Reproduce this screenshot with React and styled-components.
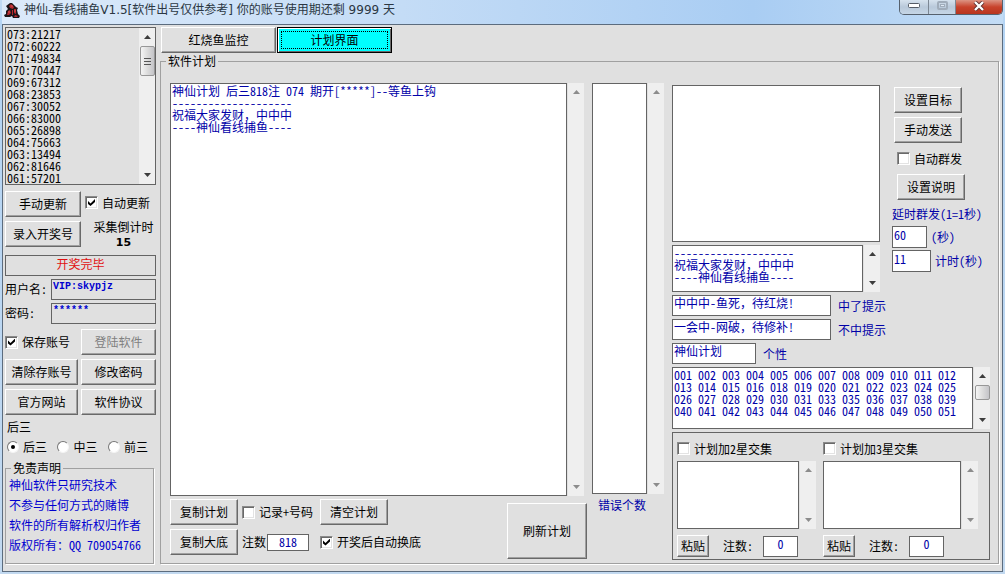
import styled, { createGlobalStyle, css } from 'styled-components';

const DRAWS = [
    '073:21217', '072:60222', '071:49834', '070:70447', '069:67312', '068:23853', '067:30052',
    '066:83000', '065:26898', '064:75663', '063:13494', '062:81646', '061:57201',
];

const PLAN_TEXT = [
    '神仙计划 后三818注 074 期开[*****]--等鱼上钩',
    '--------------------',
    '祝福大家发财，中中中',
    '----神仙看线捕鱼----',
].join('\n');

const SIGNATURE = [
    '--------------------',
    '祝福大家发财，中中中',
    '----神仙看线捕鱼----',
].join('\n');

const NUMBERS = [
    '001 002 003 004 005 006 007 008 009 010 011 012',
    '013 014 015 016 018 019 020 021 022 023 024 025',
    '026 027 028 029 030 031 033 035 036 037 038 039',
    '040 041 042 043 044 045 046 047 048 049 050 051',
].join('\n');

const DISCLAIMER = [
    '神仙软件只研究技术',
    '不参与任何方式的赌博',
    '软件的所有解析权归作者',
    '版权所有：QQ 709054766',
];

/* ── Small shared parts ───────────────────────── */
const Arrow = ({ down, dim }) => (
    <svg width="7" height="4" viewBox="0 0 7 4" aria-hidden="true">
        <path d={down ? 'M0 0H7L3.5 4Z' : 'M0 4H7L3.5 0Z'} fill={dim ? '#8c8c8c' : '#3c3c3c'} />
    </svg>
);

const ScrollBar = ({ dim, thumb, grip }) => (
    <Track aria-hidden="true">
        <Arrow dim={dim} />
        {thumb && <Thumb $h={thumb}>{grip && <><i /><i /><i /></>}</Thumb>}
        <TrackSpace />
        <Arrow down dim={dim} />
    </Track>
);

const Check = ({ children, ...rest }) => (
    <Option>
        <Tick type="checkbox" {...rest} />
        <span>{children}</span>
    </Option>
);

const AppIcon = () => (
    <svg width="17" height="18" viewBox="0 0 17 18" aria-hidden="true">
        <path d="M3 5 7 2 9 2 13 6 15 7 14 9 15 13 17 15 16 17 10 17 9 15 7 16 2 16 1 14 3 13 3 10 5 8Z" fill="#1d1418" />
        <path d="M6 5 8 3 11 6 10 8 7 7ZM5 10 7 9 8 12 6 14 4 14ZM11 8 13 8 13 13 11 12ZM9 9h1v5H9ZM12 14 15 15 14 16 11 16Z" fill="#b3282e" />
        <path d="M8 5h2M5 11h2M11 10h2" stroke="#d8504f" />
    </svg>
);

const Sidebar = () => (
    <Side>
        <Field $plain>
            <Area $h={158} $tone="black" $grey $bare readOnly aria-label="开奖记录" defaultValue={DRAWS.join('\n')} />
            <ScrollBar thumb={30} grip />
        </Field>

        <UpdateGrid>
            <Button>手动更新</Button>
            <Check defaultChecked>自动更新</Check>
            <Button>录入开奖号</Button>
            <Countdown>采集倒计时<b>15</b></Countdown>
        </UpdateGrid>

        <Login>
            <Status>开奖完毕</Status>
            <label htmlFor="user">用户名:</label>
            <Account id="user" $grey defaultValue="VIP:skypjz" />
            <label htmlFor="pass">密码:</label>
            <Account id="pass" $grey defaultValue="******" />
        </Login>

        <ButtonGrid>
            <Check defaultChecked>保存账号</Check>
            <Button disabled>登陆软件</Button>
            <Button>清除存账号</Button>
            <Button>修改密码</Button>
            <Button>官方网站</Button>
            <Button>软件协议</Button>
        </ButtonGrid>

        <Modes>
            <span>后三</span>
            <ModeRow>
                {['后三', '中三', '前三'].map((m, i) => (
                    <Option key={m}>
                        <Radio type="radio" name="mode" defaultChecked={i === 0} />
                        {m}
                    </Option>
                ))}
            </ModeRow>
        </Modes>

        <NoteGroup>
            <legend>免责声明</legend>
            <Notes>
                {DISCLAIMER.map(l => <p key={l}>{l}</p>)}
            </Notes>
        </NoteGroup>
    </Side>
);

const PlanColumn = () => (
    <Plan>
        <PlanEditor>
            <Area $fill readOnly aria-label="计划" defaultValue={PLAN_TEXT} />
            <ScrollBar dim />
        </PlanEditor>
        <PlanFooter>
            <PlanActions>
                <Button>复制计划</Button>
                <Check>记录+号码</Check>
                <Button>清空计划</Button>
                <Button>复制大底</Button>
                <Count>
                    注数
                    <Input $w={42} $h={17} $center defaultValue="818" />
                </Count>
                <Check defaultChecked>开奖后自动换底</Check>
            </PlanActions>
            <Refresh>刷新计划</Refresh>
        </PlanFooter>
    </Plan>
);

const ErrorColumn = () => (
    <Errors>
        <Field $grow>
            <Area id="errors" $fill readOnly />
            <ScrollBar dim />
        </Field>
        <ErrorLabel htmlFor="errors">错误个数</ErrorLabel>
    </Errors>
);

const SettingsColumn = () => (
    <Settings>
        <SettingsTop>
            <Messages>
                <Target>
                    <Area $h={157} aria-label="目标" />
                </Target>
                <Target>
                    <Area $h={47} aria-label="签名" defaultValue={SIGNATURE} />
                    <ScrollBar />
                </Target>
                <Prompt><Input $w={159} defaultValue="中中中-鱼死，待红烧!" />中了提示</Prompt>
                <Prompt><Input $w={159} defaultValue="一会中-网破，待修补!" />不中提示</Prompt>
                <Prompt><Input $w={84} defaultValue="神仙计划" />个性</Prompt>
            </Messages>
            <Sending>
                <Button>设置目标</Button>
                <Button>手动发送</Button>
                <SendMore>
                    <Check>自动群发</Check>
                    <Button>设置说明</Button>
                </SendMore>
                <Timers>
                    <span>延时群发(1=1秒)</span>
                    <Timer><Input $w={35} $h={22} defaultValue="60" />(秒)</Timer>
                    <Timer><Input $w={39} $h={22} defaultValue="11" />计时(秒)</Timer>
                </Timers>
            </Sending>
        </SettingsTop>

        <Field>
            <Area $h={62} aria-label="号码" defaultValue={NUMBERS} />
            <ScrollBar thumb={15} />
        </Field>

        <Stars>
            {[2, 3].map(n => (
                <Star key={n}>
                    <Check>计划加{n}星交集</Check>
                    <Field>
                        <Area $h={68} aria-label={`${n}星号码`} />
                        <ScrollBar dim />
                    </Field>
                    <StarFooter>
                        <Paste>粘贴</Paste>
                        <StarCount>注数:<Input $w={35} $center defaultValue="0" /></StarCount>
                    </StarFooter>
                </Star>
            ))}
        </Stars>
    </Settings>
);

const App = () => (
    <Window>
        <GlobalStyle />
        <TitleBar>
            <AppIcon />
            <Title>神仙-看线捕鱼V1.5[软件出号仅供参考] 你的账号使用期还剩 9999 天</Title>
            <Controls>
                <Control aria-label="最小化" $w={28}>
                    <svg width="12" height="5"><rect x="0.5" y="0.5" width="11" height="4" rx="1" fill="#fff" stroke="#555c66" /></svg>
                </Control>
                <Control aria-label="最大化" $w={27} disabled>
                    <svg width="11" height="9">
                        <rect x="1" y="1" width="9" height="7" rx="1" fill="none" stroke="#a0acba" strokeWidth="2" />
                        <rect x="3.5" y="3.5" width="4" height="2" fill="#dfe9f4" stroke="#a0acba" />
                    </svg>
                </Control>
                <Control aria-label="关闭" $w={47} $close>
                    <svg width="12" height="10" viewBox="0 0 12 10">
                        <path d="M2 1 10 9M10 1 2 9" stroke="#5e3030" strokeWidth="4" />
                        <path d="M2 1 10 9M10 1 2 9" stroke="#fff" strokeWidth="2.4" />
                    </svg>
                </Control>
            </Controls>
        </TitleBar>
        <Client>
            <Sidebar />
            <Main>
                <Tabs>
                    <Tab>红烧鱼监控</Tab>
                    <Tab $active>计划界面</Tab>
                </Tabs>
                <PlanGroup>
                    <legend>软件计划</legend>
                    <Body>
                        <PlanColumn />
                        <ErrorColumn />
                        <SettingsColumn />
                    </Body>
                </PlanGroup>
            </Main>
        </Client>
    </Window>
);

/* ── Styles ─────────────────────────────────── */
const FACE = '#e0e0e0';
const INK = '#0000a8';
const EDGE = '#646464';

const GlobalStyle = createGlobalStyle`
    * { box-sizing: border-box; }
    body { margin: 0; }
    body, button, input, textarea {
        font-family: 'Noto Sans Mono CJK SC', 'Noto Sans CJK SC', sans-serif;
        font-size: 12px;
        line-height: 12px;
    }
    p { margin: 0; }
`;

const Window = styled.div`
    display: flex; flex-direction: column;
    min-height: 100vh; padding: 0 2px 2px;
    background: linear-gradient(#c3dcf5, #b4d4f4 24px, #c2d9f0);
    color: #000;
`;
const TitleBar = styled.header`
    display: flex; align-items: center; gap: 4px;
    height: 24px; padding: 0 0 4px 1px;
    background: linear-gradient(90deg, #dceafa, #c4dcf6 40%, #a9cdf3 75%, #c3dcf5);
`;
const Title = styled.div`
    flex: 1; font-family: 'DejaVu Sans', 'Noto Sans CJK SC', sans-serif; color: #2b3743;
    line-height: 20px; white-space: nowrap;
`;
const Controls = styled.div`
    display: flex; align-self: flex-start;
    border: 1px solid #56616e; border-top: 0; border-radius: 0 0 5px 5px; overflow: hidden;
`;
const Control = styled.button`
    display: flex; align-items: center; justify-content: center;
    width: ${p => p.$w}px; height: 14px; padding: 0 0 3px;
    border: 0; border-left: 1px solid #7c8794;
    background: ${p => p.$close
        ? 'linear-gradient(#dc9484, #c8432c 50%, #b8351f)'
        : 'linear-gradient(#d6e2ee, #b9c9da 50%, #c6d6e6)'};
    &:first-child { border-left: 0; }
`;
const Client = styled.div`
    flex: 1; display: flex; gap: 4px; padding: 2px;
    border: 1px solid #5c6c7e; background: ${FACE};
`;
const Side = styled.aside`
    display: flex; flex-direction: column; gap: 5px; width: 151px; flex-shrink: 0;
`;
const Main = styled.main`
    flex: 1; min-width: 0; display: flex; flex-direction: column; gap: 1px; padding-bottom: 5px;
`;

const Button = styled.button`
    height: 26px; padding: 0; white-space: nowrap;
    background: ${FACE}; color: #000;
    border: 1px solid; border-color: #fff #696969 #696969 #fff;
    box-shadow: inset -1px -1px #a0a0a0;
    &:disabled { color: #808080; }
`;
const Tab = styled(Button)`
    width: 115px;
    ${p => p.$active && css`
        background: #00ffff; border-color: #000;
        box-shadow: inset 1px 1px #fff, inset -1px -1px #696969;
        outline: 1px dotted #000; outline-offset: -5px;
    `}
`;
const Refresh = styled(Button)`width: 80px; height: 56px;`;
const Paste = styled(Button)`width: 32px; height: 22px;`;

const Input = styled.input`
    width: ${p => p.$w ? `${p.$w}px` : '100%'}; height: ${p => p.$h || 21}px;
    padding: ${p => p.$h === 17 ? '0 1px 2px' : '0 1px 6px'}; min-width: 0;
    border: 1px solid ${EDGE}; border-radius: 0;
    background: ${p => p.$grey ? FACE : '#fff'}; color: ${INK};
    text-align: ${p => p.$center ? 'center' : 'left'};
`;
const Account = styled(Input)`
    font-family: 'Liberation Mono', monospace; font-size: 10px; font-weight: 700; color: #0000d0;
`;
const Area = styled.textarea`
    display: block; flex: 1; min-width: 0; width: 100%; resize: none; overflow: hidden;
    height: ${p => p.$fill ? 'auto' : `${p.$h}px`};
    margin: 0; padding: 1px; outline-offset: -1px;
    border: 1px solid ${EDGE}; border-radius: 0;
    background: ${p => p.$grey ? FACE : '#fff'}; color: ${p => p.$tone || INK};
    white-space: pre;
    ${p => p.$bare && 'height: 156px; padding: 0 1px; border: 0;'}
`;
const Field = styled.div`
    display: flex; gap: ${p => p.$plain ? 0 : 1}px;
    ${p => p.$plain && `border: 1px solid ${EDGE};`}
    ${p => p.$grow && 'flex: 1;'}
`;
const Track = styled.div`
    display: flex; flex-direction: column; align-items: center;
    flex: 0 0 16px; padding: 7px 0; background: #efefef;
`;
const TrackSpace = styled.div`flex: 1;`;
const Thumb = styled.div`
    display: flex; flex-direction: column; align-items: center; justify-content: center; gap: 2px;
    width: 15px; height: ${p => p.$h}px; margin-top: 7px;
    border: 1px solid #979797; border-radius: 2px;
    background: linear-gradient(90deg, #f5f5f5, #dcdcdc 50%, #c4c4c8);
    i { width: 7px; height: 1px; background: #555; }
`;

const Option = styled.label`
    display: flex; align-items: center; gap: 4px; white-space: nowrap;
`;
const Tick = styled.input`
    appearance: none; width: 13px; height: 13px; margin: 0; flex-shrink: 0;
    background: #fff; border: 1px solid; border-color: #8a8a8a #fff #fff #8a8a8a;
    box-shadow: inset 1px 1px #696969, inset -1px -1px #e3e3e3;
    &:checked::before {
        content: ''; display: block; width: 7px; height: 7px; margin: 2px;
        background: #000;
        clip-path: polygon(0 29%, 36% 64%, 100% 0, 100% 43%, 36% 100%, 0 71%);
    }
`;
const Radio = styled.input`
    appearance: none; width: 12px; height: 12px; margin: 0; flex-shrink: 0;
    border-radius: 50%; background: #fff;
    border: 1px solid; border-color: #777 #f4f4f4 #f4f4f4 #777;
    &:checked::before {
        content: ''; display: block; width: 4px; height: 4px; margin: 3px;
        border-radius: 50%; background: #000;
    }
`;

const UpdateGrid = styled.div`
    display: grid; grid-template-columns: 76px 1fr; gap: 4px; padding: 1px 0 3px;
    ${Option} { padding-bottom: 3px; }
`;
const Countdown = styled.div`
    display: flex; flex-direction: column; align-items: center; gap: 4px;
    height: 26px; padding-left: 6px; white-space: nowrap;
    b { font-family: 'DejaVu Sans', sans-serif; font-size: 11px; }
`;
const Login = styled.div`
    display: grid; grid-template-columns: 46px 1fr; row-gap: 3px; align-items: center;
    label { line-height: 20px; padding-bottom: 1px; white-space: nowrap; }
`;
const Status = styled.div`
    grid-column: 1 / -1; height: 21px; padding-top: 2px;
    border: 1px solid ${EDGE}; color: #e01010; text-align: center;
`;
const ButtonGrid = styled.div`
    display: grid; grid-template-columns: 73px 75px; gap: 4px 3px;
`;
const Modes = styled.div`
    display: flex; flex-direction: column; gap: 8px; padding: 1px 0 3px 2px;
`;
const ModeRow = styled.div`display: flex; justify-content: space-between; padding-right: 8px;`;

const Group = styled.fieldset`
    margin: 0; padding: 0; min-width: 0;
    border: 1px solid #a0a0a0; box-shadow: 1px 1px #fff;
    legend { margin-left: 5px; padding: 0 2px; line-height: 14px; }
`;
const NoteGroup = styled(Group)`margin-right: 2px;`;
const PlanGroup = styled(Group)`flex: 1; margin-right: 1px;`;
const Notes = styled.div`
    padding: 0 0 8px 3px; color: #0000d0; line-height: 20px; white-space: nowrap;
`;

const Tabs = styled.nav`display: flex; gap: 1px; padding-left: 1px;`;
const Body = styled.div`display: flex; padding: 15px 8px 2px 9px;`;

const Plan = styled.section`flex: 1; min-width: 0; display: flex; flex-direction: column;`;
const PlanEditor = styled.div`flex: 1; display: flex; gap: 1px; padding-right: 3px;`;
const PlanFooter = styled.div`
    display: flex; justify-content: space-between; align-items: flex-end;
    height: 64px; padding: 3px 0 1px;
`;
const PlanActions = styled.div`
    display: grid; grid-template-columns: 68px 74px auto; gap: 4px; align-items: center;
    justify-items: start; align-self: flex-start;
    ${Button} { width: 68px; }
`;
const Count = styled.label`display: flex; align-items: center; gap: 1px; white-space: nowrap;`;

const Errors = styled.section`
    display: flex; flex-direction: column; width: 72px; margin: 0 8px 0 5px;
`;
const ErrorLabel = styled.label`height: 66px; padding: 5px 0 0 6px; color: ${INK};`;

const Settings = styled.section`
    display: flex; flex-direction: column; gap: 3px; width: 318px; padding-top: 2px;
`;
const SettingsTop = styled.div`display: grid; grid-template-columns: 214px 1fr; gap: 6px;`;
const Messages = styled.div`display: flex; flex-direction: column; gap: 3px;`;
const Target = styled.div`display: flex; gap: 1px; padding-right: 6px;`;
const Prompt = styled.label`
    display: flex; align-items: center; gap: 7px; color: ${INK}; white-space: nowrap;
`;
const Sending = styled.div`
    display: flex; flex-direction: column; align-items: flex-start; gap: 4px; padding: 2px 0 0 2px;
    ${Button} { width: 68px; }
`;
const SendMore = styled.div`
    display: flex; flex-direction: column; gap: 9px; padding: 5px 0 0 3px;
`;
const Timers = styled.div`
    display: flex; flex-direction: column; gap: 2px; margin-left: -2px; padding-top: 2px;
    color: ${INK}; white-space: nowrap;
    span { line-height: 16px; padding-bottom: 2px; }
`;
const Timer = styled.label`display: flex; align-items: center; gap: 4px;`;

const Stars = styled.div`
    display: grid; grid-template-columns: 139px 155px; gap: 7px;
    padding: 9px 0 2px 4px; border: 1px solid ${EDGE};
`;
const Star = styled.div`display: flex; flex-direction: column; gap: 6px;`;
const StarFooter = styled.div`display: flex; align-items: center; gap: 14px;`;
const StarCount = styled.label`
    display: flex; align-items: center; gap: 10px; white-space: nowrap;
`;

export default App;
